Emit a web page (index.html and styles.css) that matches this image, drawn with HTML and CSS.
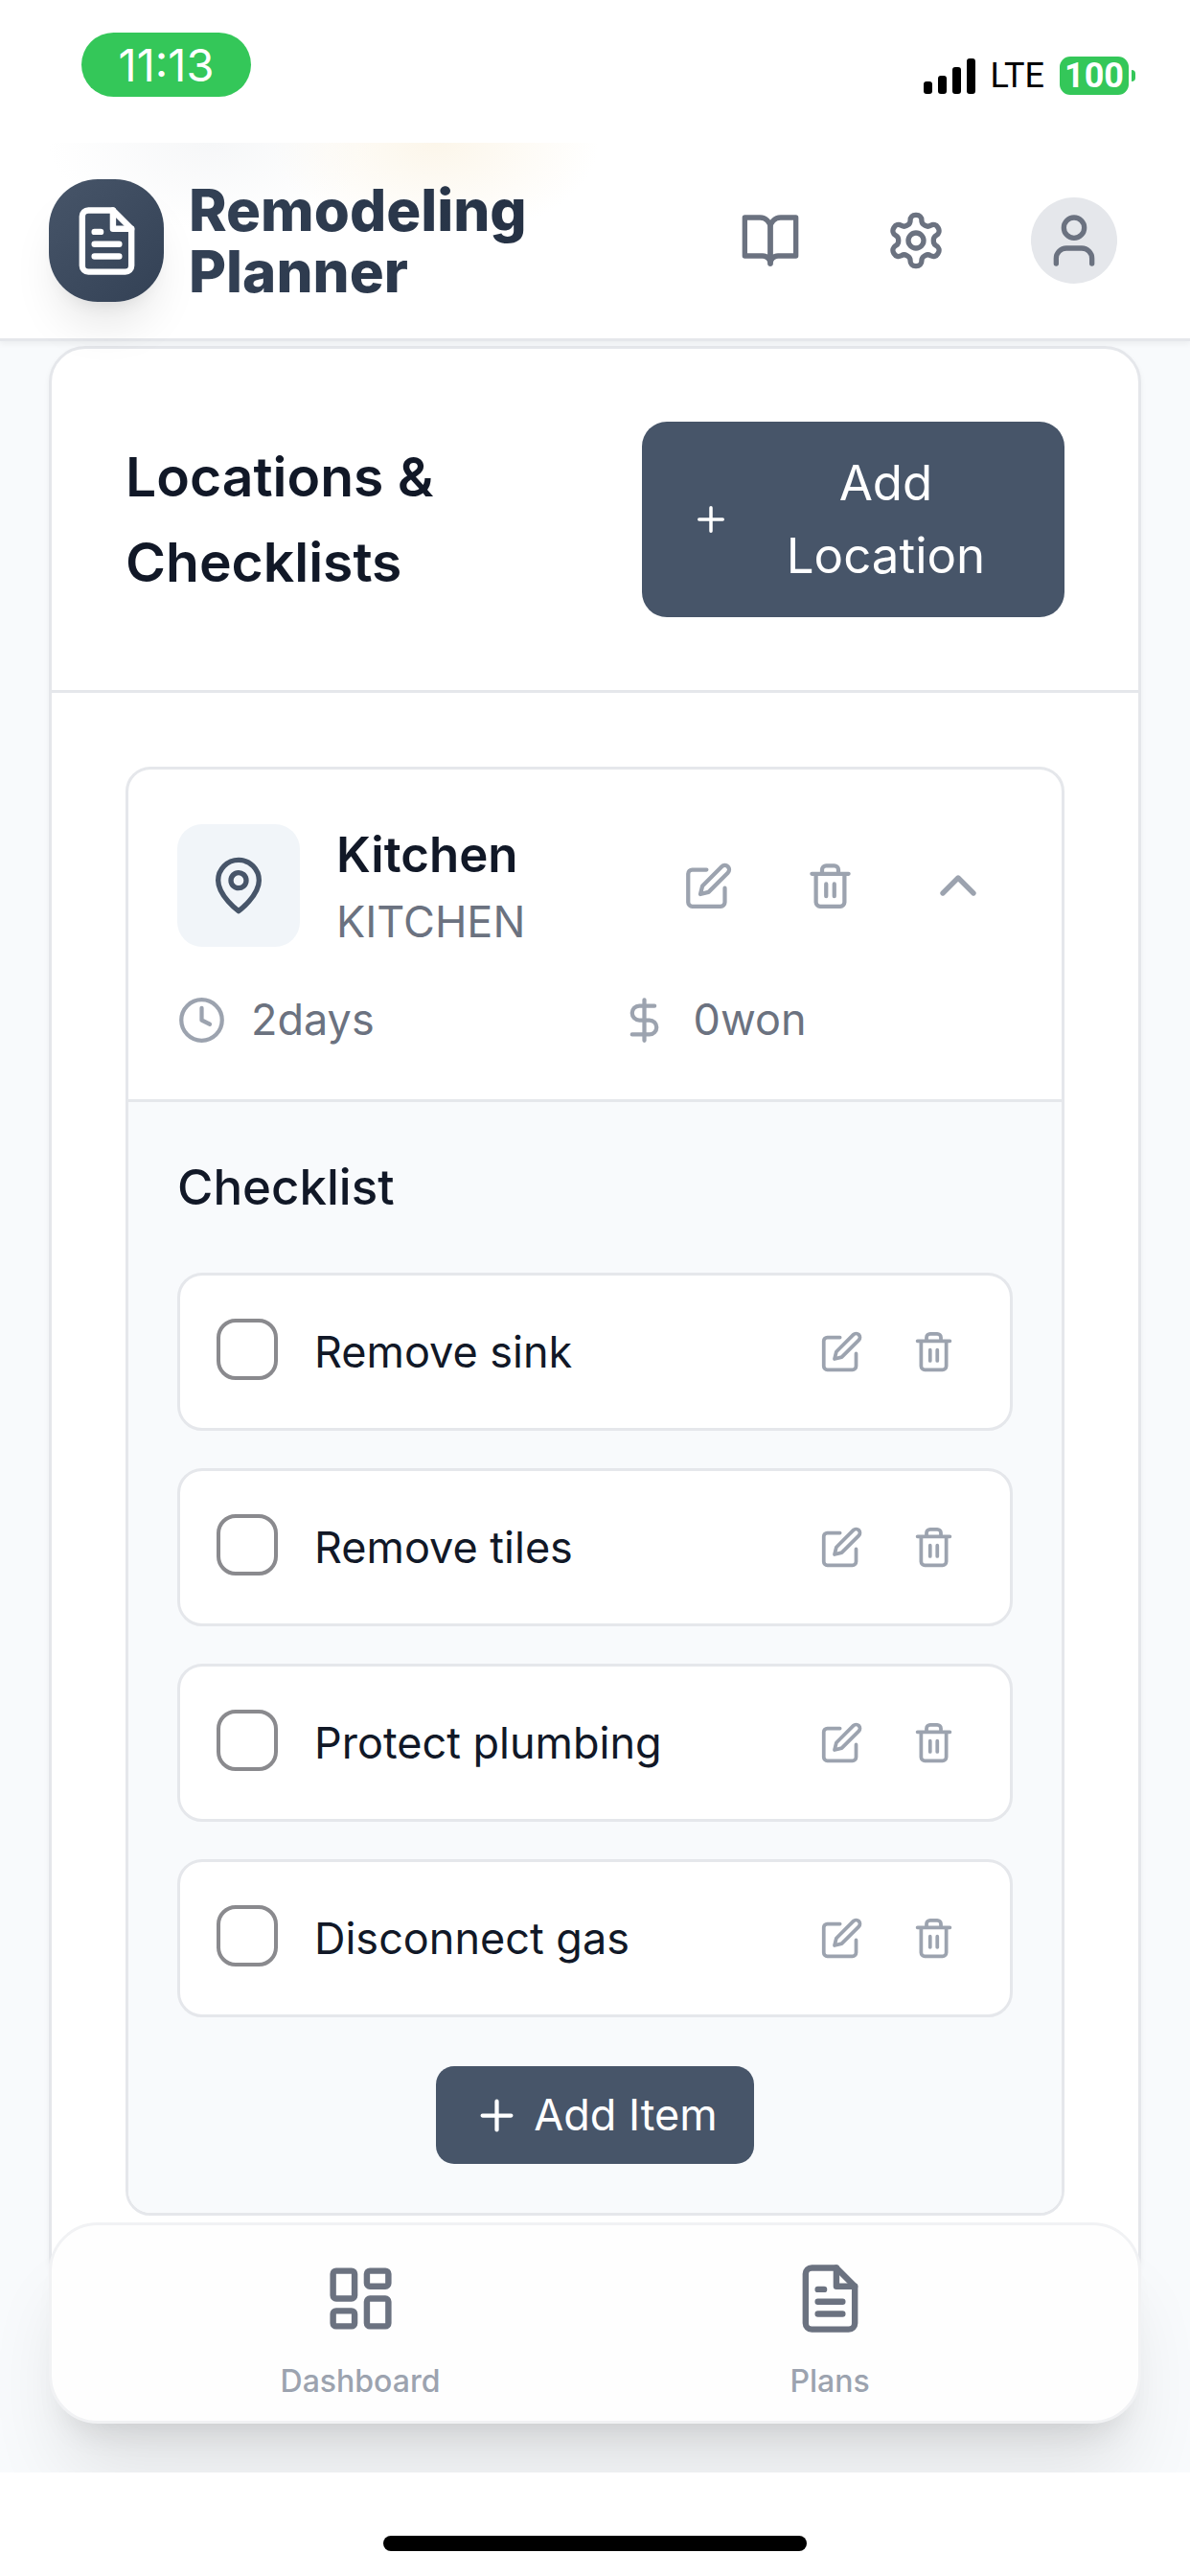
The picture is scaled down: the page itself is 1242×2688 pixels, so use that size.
FILE: index.html
```html
<!DOCTYPE html>
<html lang="en">
<head>
    <meta charset="UTF-8">
    <meta name="viewport" content="width=device-width, initial-scale=1.0">
    <title>Remodeling Planner</title>
    <link rel="stylesheet" href="styles.css">
</head>
<body>
    <!-- Icon set -->
    <svg class="icon-defs" aria-hidden="true">
        <symbol id="icon-file" viewBox="0 0 24 24">
            <path d="M14 2H6a2 2 0 0 0-2 2v16a2 2 0 0 0 2 2h12a2 2 0 0 0 2-2V8z"/>
            <path d="M14 2v6h6M10 9H8M16 13H8M16 17H8"/>
        </symbol>
        <symbol id="icon-book" viewBox="0 0 24 24">
            <path d="M2 3h6a4 4 0 0 1 4 4v14a3 3 0 0 0-3-3H2z"/>
            <path d="M22 3h-6a4 4 0 0 0-4 4v14a3 3 0 0 1 3-3h7z"/>
        </symbol>
        <symbol id="icon-settings" viewBox="0 0 24 24">
            <path d="M12.22 2h-.44a2 2 0 0 0-2 2v.18a2 2 0 0 1-1 1.73l-.43.25a2 2 0 0 1-2 0l-.15-.08a2 2 0 0 0-2.73.73l-.22.38a2 2 0 0 0 .73 2.73l.15.1a2 2 0 0 1 1 1.72v.51a2 2 0 0 1-1 1.74l-.15.09a2 2 0 0 0-.73 2.73l.22.38a2 2 0 0 0 2.73.73l.15-.08a2 2 0 0 1 2 0l.43.25a2 2 0 0 1 1 1.73V20a2 2 0 0 0 2 2h.44a2 2 0 0 0 2-2v-.18a2 2 0 0 1 1-1.73l.43-.25a2 2 0 0 1 2 0l.15.08a2 2 0 0 0 2.73-.73l.22-.39a2 2 0 0 0-.73-2.73l-.15-.08a2 2 0 0 1-1-1.74v-.5a2 2 0 0 1 1-1.74l.15-.09a2 2 0 0 0 .73-2.73l-.22-.38a2 2 0 0 0-2.73-.73l-.15.08a2 2 0 0 1-2 0l-.43-.25a2 2 0 0 1-1-1.73V4a2 2 0 0 0-2-2z"/>
            <circle cx="12" cy="12" r="3"/>
        </symbol>
        <symbol id="icon-user" viewBox="0 0 24 24">
            <path d="M19 21v-2a4 4 0 0 0-4-4H9a4 4 0 0 0-4 4v2"/>
            <circle cx="12" cy="7" r="4"/>
        </symbol>
        <symbol id="icon-plus" viewBox="0 0 24 24">
            <path d="M5 12h14M12 5v14"/>
        </symbol>
        <symbol id="icon-pin" viewBox="0 0 24 24">
            <path d="M20 10c0 6-8 12-8 12s-8-6-8-12a8 8 0 0 1 16 0Z"/>
            <circle cx="12" cy="10" r="3"/>
        </symbol>
        <symbol id="icon-edit" viewBox="0 0 24 24">
            <path d="M11 4H4a2 2 0 0 0-2 2v14a2 2 0 0 0 2 2h14a2 2 0 0 0 2-2v-7"/>
            <path d="M18.5 2.5a2.12 2.12 0 0 1 3 3L12 15l-4 1 1-4Z"/>
        </symbol>
        <symbol id="icon-trash" viewBox="0 0 24 24">
            <path d="M3 6h18M19 6v14c0 1-1 2-2 2H7c-1 0-2-1-2-2V6M8 6V4c0-1 1-2 2-2h4c1 0 2 1 2 2v2M10 11v6M14 11v6"/>
        </symbol>
        <symbol id="icon-chevron-up" viewBox="0 0 24 24">
            <path d="m18 15-6-6-6 6"/>
        </symbol>
        <symbol id="icon-clock" viewBox="0 0 24 24">
            <circle cx="12" cy="12" r="10"/>
            <path d="M12 6v6l4 2"/>
        </symbol>
        <symbol id="icon-dollar" viewBox="0 0 24 24">
            <path d="M12 2v20M17 5H9.5a3.5 3.5 0 0 0 0 7h5a3.5 3.5 0 0 1 0 7H6"/>
        </symbol>
        <symbol id="icon-dashboard" viewBox="0 0 24 24">
            <rect x="3" y="3" width="7" height="9" rx="1"/>
            <rect x="14" y="3" width="7" height="5" rx="1"/>
            <rect x="14" y="12" width="7" height="9" rx="1"/>
            <rect x="3" y="16" width="7" height="5" rx="1"/>
        </symbol>
    </svg>

    <div class="status-bar">
        <span class="status-time">11:13</span>
        <div class="status-right">
            <svg class="signal" viewBox="0 0 54 37" aria-hidden="true">
                <rect x="0" y="24" width="9" height="13" rx="3"/>
                <rect x="15" y="18" width="9" height="19" rx="3"/>
                <rect x="30" y="9" width="9" height="28" rx="3"/>
                <rect x="45" y="0" width="9" height="37" rx="3"/>
            </svg>
            <span class="network">LTE</span>
            <div class="battery">
                <span class="battery-level">100</span>
                <span class="battery-tip"></span>
            </div>
        </div>
    </div>

    <div class="app">
        <header class="header">
            <div class="brand">
                <div class="logo"><svg class="icon icon-xl"><use href="#icon-file"/></svg></div>
                <h1>Remodeling Planner</h1>
            </div>
            <div class="header-actions">
                <button class="header-button" aria-label="Guide"><svg class="icon icon-lg"><use href="#icon-book"/></svg></button>
                <button class="header-button" aria-label="Settings"><svg class="icon icon-lg"><use href="#icon-settings"/></svg></button>
                <button class="header-button" aria-label="Profile">
                    <span class="avatar"><svg class="icon icon-lg"><use href="#icon-user"/></svg></span>
                </button>
            </div>
        </header>

        <main>
            <section class="card">
                <div class="card-header">
                    <h2>Locations &amp; Checklists</h2>
                    <button class="add-location">
                        <svg class="icon"><use href="#icon-plus"/></svg>
                        <span>Add Location</span>
                    </button>
                </div>

                <div class="card-body">
                    <article class="location">
                        <div class="location-header">
                            <div class="location-top">
                                <div class="location-icon"><svg class="icon icon-lg"><use href="#icon-pin"/></svg></div>
                                <div class="location-name">
                                    <h3>Kitchen</h3>
                                    <p>KITCHEN</p>
                                </div>
                                <div class="location-actions">
                                    <button class="icon-button" aria-label="Edit location"><svg class="icon icon-md"><use href="#icon-edit"/></svg></button>
                                    <button class="icon-button" aria-label="Delete location"><svg class="icon icon-md"><use href="#icon-trash"/></svg></button>
                                    <button class="icon-button" aria-label="Collapse"><svg class="icon icon-lg"><use href="#icon-chevron-up"/></svg></button>
                                </div>
                            </div>
                            <div class="location-meta">
                                <div class="meta"><svg class="icon icon-md"><use href="#icon-clock"/></svg><span>2days</span></div>
                                <div class="meta"><svg class="icon icon-md"><use href="#icon-dollar"/></svg><span>0won</span></div>
                            </div>
                        </div>

                        <div class="checklist">
                            <h4>Checklist</h4>
                            <ul class="items">
                                <li class="item">
                                    <input type="checkbox" id="item1">
                                    <label for="item1">Remove sink</label>
                                    <div class="item-actions">
                                        <button class="item-button" aria-label="Edit item"><svg class="icon icon-sm"><use href="#icon-edit"/></svg></button>
                                        <button class="item-button" aria-label="Delete item"><svg class="icon icon-sm"><use href="#icon-trash"/></svg></button>
                                    </div>
                                </li>
                                <li class="item">
                                    <input type="checkbox" id="item2">
                                    <label for="item2">Remove tiles</label>
                                    <div class="item-actions">
                                        <button class="item-button" aria-label="Edit item"><svg class="icon icon-sm"><use href="#icon-edit"/></svg></button>
                                        <button class="item-button" aria-label="Delete item"><svg class="icon icon-sm"><use href="#icon-trash"/></svg></button>
                                    </div>
                                </li>
                                <li class="item">
                                    <input type="checkbox" id="item3">
                                    <label for="item3">Protect plumbing</label>
                                    <div class="item-actions">
                                        <button class="item-button" aria-label="Edit item"><svg class="icon icon-sm"><use href="#icon-edit"/></svg></button>
                                        <button class="item-button" aria-label="Delete item"><svg class="icon icon-sm"><use href="#icon-trash"/></svg></button>
                                    </div>
                                </li>
                                <li class="item">
                                    <input type="checkbox" id="item4">
                                    <label for="item4">Disconnect gas</label>
                                    <div class="item-actions">
                                        <button class="item-button" aria-label="Edit item"><svg class="icon icon-sm"><use href="#icon-edit"/></svg></button>
                                        <button class="item-button" aria-label="Delete item"><svg class="icon icon-sm"><use href="#icon-trash"/></svg></button>
                                    </div>
                                </li>
                            </ul>
                            <button class="add-item">
                                <svg class="icon icon-md"><use href="#icon-plus"/></svg>
                                <span>Add Item</span>
                            </button>
                        </div>
                    </article>
                </div>
            </section>
        </main>

        <nav class="bottom-nav">
            <a href="#dashboard"><svg class="icon icon-xl"><use href="#icon-dashboard"/></svg><span>Dashboard</span></a>
            <a href="#plans"><svg class="icon icon-xl"><use href="#icon-file"/></svg><span>Plans</span></a>
        </nav>
    </div>

    <div class="home-area"><div class="home-indicator"></div></div>
</body>
</html>
```

FILE: styles.css
```css
* {
    box-sizing: border-box;
}

body {
    margin: 0;
    min-height: 100vh;
    display: flex;
    flex-direction: column;
    background: #fff;
    color: #111827;
    font-family: Inter, "Liberation Sans", sans-serif;
    font-size: 45px;
    line-height: 64px;
}

h1, h2, h3, h4, p, ul {
    margin: 0;
    padding: 0;
}

button {
    border: none;
    background: none;
    padding: 0;
    font: inherit;
    color: inherit;
    cursor: pointer;
}

/* Icons */
.icon-defs {
    display: none;
}

.icon {
    display: block;
    flex-shrink: 0;
    fill: none;
    stroke: currentColor;
    stroke-width: 2;
    stroke-linecap: round;
    stroke-linejoin: round;
}

.icon-sm {
    width: 45px;
    height: 45px;
}

.icon-md {
    width: 51px;
    height: 51px;
}

.icon-lg {
    width: 64px;
    height: 64px;
}

.icon-xl {
    width: 77px;
    height: 77px;
}

/* Status bar */
.status-bar {
    height: 149px;
    padding: 34px 57px 0 85px;
    display: flex;
    justify-content: space-between;
    align-items: flex-start;
}

.status-time {
    width: 177px;
    border-radius: 34px;
    background: #34c759;
    color: #fff;
    font-size: 47px;
    line-height: 67px;
    text-align: center;
}

.status-right {
    display: flex;
    align-items: center;
    padding-top: 25px;
    color: #000;
    font-family: Roboto, sans-serif;
    font-size: 36px;
    line-height: 40px;
}

.signal {
    width: 54px;
    height: 37px;
    margin-right: 16px;
}

.network {
    margin-right: 16px;
}

.battery {
    display: flex;
    align-items: center;
    gap: 3px;
}

.battery-level {
    width: 72px;
    border-radius: 11px;
    background: #34c759;
    color: #fff;
    font-weight: 700;
    text-align: center;
}

.battery-tip {
    width: 4px;
    height: 12px;
    border-radius: 0 4px 4px 0;
    background: #34c759;
}

.app {
    flex: 1;
    position: relative;
    overflow: hidden;
    background: #f8fafc;
}

/* Header */
.header {
    position: relative;
    z-index: 2;
    display: flex;
    justify-content: space-between;
    align-items: center;
    padding: 38px 51px;
    border-bottom: 3px solid #e5e7eb;
    background:
        radial-gradient(ellipse 170px 100px at 455px 0, #fcf6ea, transparent),
        radial-gradient(ellipse 170px 90px at 220px 0, #f6f7f8, transparent),
        #fff;
    box-shadow: 0 3px 6px rgba(0, 0, 0, 0.05);
}

.brand {
    display: flex;
    align-items: center;
    gap: 26px;
}

.logo {
    flex-shrink: 0;
    width: 120px;
    height: 128px;
    display: flex;
    align-items: center;
    justify-content: center;
    border-radius: 51px;
    background: linear-gradient(135deg, #475569, #334155);
    color: #fff;
    box-shadow: 0 32px 48px -10px rgba(0, 0, 0, 0.1), 0 13px 19px -13px rgba(0, 0, 0, 0.1);
}

h1 {
    font-size: 60px;
    font-weight: 800;
    line-height: 64px;
    background: linear-gradient(to right, #334155, #1e293b);
    -webkit-background-clip: text;
    background-clip: text;
    color: transparent;
}

.header-actions {
    display: flex;
    align-items: center;
    gap: 38px;
    color: #6b7280;
}

.header-button {
    padding: 0 25px;
}

.avatar {
    width: 90px;
    height: 90px;
    display: flex;
    align-items: center;
    justify-content: center;
    border-radius: 50%;
    background: #e5e7eb;
}

/* Main card */
main {
    padding: 5px 51px 0;
}

.card {
    border: 3px solid #e5e7eb;
    border-radius: 38px;
    background: #fff;
    box-shadow: 0 3px 6px rgba(0, 0, 0, 0.05);
}

.card-header {
    display: flex;
    justify-content: space-between;
    align-items: center;
    padding: 76px 77px;
    border-bottom: 3px solid #e5e7eb;
}

h2 {
    font-size: 57px;
    font-weight: 600;
    line-height: 89px;
}

.add-location {
    flex: 0 0 45%;
    display: flex;
    align-items: center;
    gap: 26px;
    padding: 26px 51px;
    border-radius: 26px;
    background: #475569;
    color: #fff;
    font-size: 51px;
    line-height: 76px;
}

.add-location .icon {
    width: 42px;
    height: 42px;
}

.add-location span {
    flex: 1;
}

.card-body {
    padding: 77px;
}

/* Location */
.location {
    border: 3px solid #e5e7eb;
    border-radius: 26px;
    overflow: hidden;
}

.location-header {
    padding: 51px;
    border-bottom: 3px solid #e5e7eb;
}

.location-top {
    display: flex;
    align-items: center;
    gap: 38px;
}

.location-icon {
    width: 128px;
    height: 128px;
    display: flex;
    align-items: center;
    justify-content: center;
    border-radius: 26px;
    background: #f1f5f9;
    color: #475569;
}

.location-name {
    flex: 1;
}

h3 {
    font-size: 51px;
    font-weight: 600;
    line-height: 76px;
}

.location-name p {
    color: #6b7280;
}

.location-actions {
    display: flex;
    align-items: center;
    gap: 26px;
    color: #9ca3af;
}

.icon-button {
    padding: 25px;
}

.location-meta {
    display: grid;
    grid-template-columns: 1fr 1fr;
    gap: 51px;
    margin-top: 38px;
}

.meta {
    display: flex;
    align-items: center;
    gap: 26px;
    color: #6b7280;
}

.meta .icon {
    color: #9ca3af;
}

/* Checklist */
.checklist {
    padding: 51px;
    background: #f8fafc;
}

h4 {
    margin-bottom: 51px;
    font-size: 51px;
    font-weight: 500;
    line-height: 76px;
}

.items {
    display: flex;
    flex-direction: column;
    gap: 39px;
    margin-bottom: 51px;
    list-style: none;
}

.item {
    display: flex;
    align-items: center;
    gap: 38px;
    padding: 38px;
    border: 3px solid #e5e7eb;
    border-radius: 26px;
    background: #fff;
}

.item input {
    appearance: none;
    width: 64px;
    height: 64px;
    margin: 0 0 6px;
    border: 4px solid #8a8a8e;
    border-radius: 20px;
    background: #fff;
}

.item input:checked {
    background: #475569;
}

.item label {
    flex: 1;
}

.item-actions {
    display: flex;
    gap: 13px;
    color: #9ca3af;
}

.item-button {
    padding: 19px;
}

.add-item {
    display: flex;
    align-items: center;
    gap: 13px;
    margin: 0 auto;
    padding: 19px 38px;
    border-radius: 19px;
    background: #475569;
    color: #fff;
}

/* Bottom navigation, floats over the page */
.bottom-nav {
    position: absolute;
    left: 51px;
    right: 51px;
    bottom: 51px;
    display: grid;
    grid-template-columns: 1fr 1fr;
    padding: 38px 77px 19px;
    border: 3px solid #f1f2f4;
    border-radius: 51px;
    background: #fefefe;
    box-shadow: 0 64px 80px -16px rgba(0, 0, 0, 0.1), 0 26px 32px -19px rgba(0, 0, 0, 0.1);
}

.bottom-nav a {
    display: flex;
    flex-direction: column;
    align-items: center;
    gap: 26px;
    color: #6b7280;
    text-decoration: none;
}

.bottom-nav span {
    color: #9ca3af;
    font-size: 32px;
    font-weight: 500;
    line-height: 44px;
}

/* Home indicator */
.home-area {
    height: 108px;
    padding-top: 66px;
}

.home-indicator {
    width: 442px;
    height: 16px;
    margin: 0 auto;
    border-radius: 8px;
    background: #000;
}
```
